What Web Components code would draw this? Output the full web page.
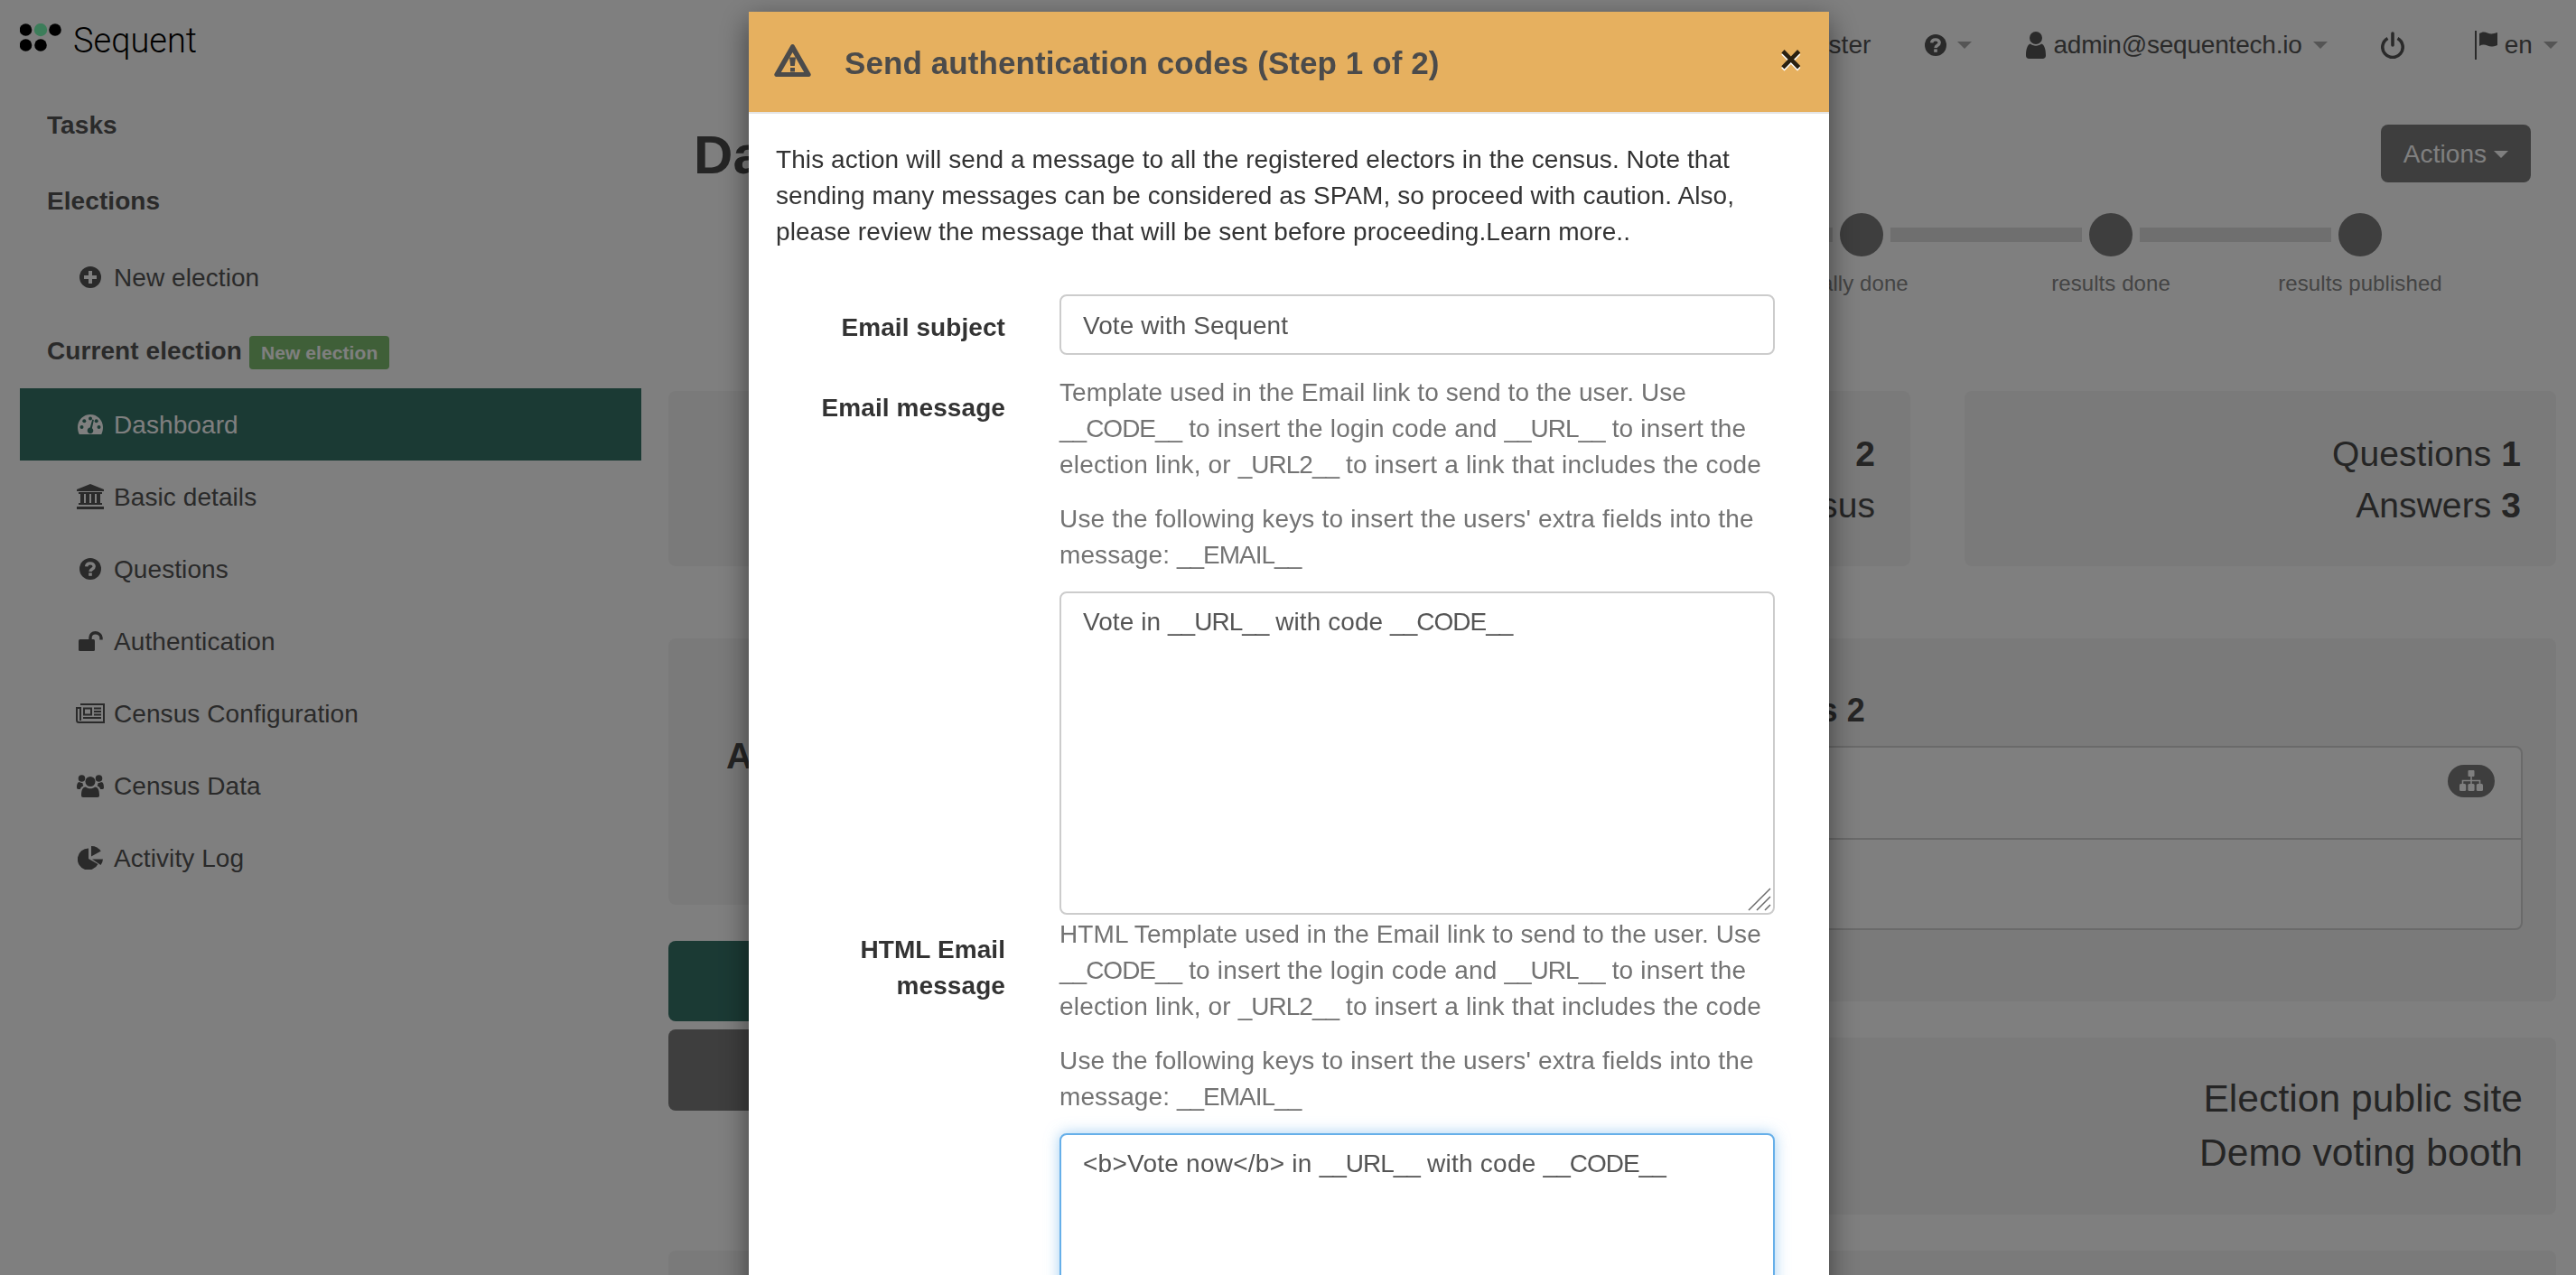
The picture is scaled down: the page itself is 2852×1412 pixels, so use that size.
<!DOCTYPE html>
<html lang="en">
<head>
<meta charset="utf-8">
<title>Sequent admin</title>
<style>
html, body { margin: 0; height: 100%; overflow: hidden; background: #fff; }
body { font: 28px/40px "Liberation Sans", Arial, sans-serif; color: #555; letter-spacing: .08px; }
</style>
</head>
<body>

<sq-page>
    <sq-topbar slot="top"></sq-topbar>
    <sq-sidebar slot="side">
        <sq-nav-head>Tasks</sq-nav-head>
        <sq-nav-head>Elections</sq-nav-head>
        <sq-nav-item icon="plus" tall>New election</sq-nav-item>
        <sq-nav-head short>Current election<sq-badge>New election</sq-badge></sq-nav-head>
        <sq-nav-item icon="gauge" active>Dashboard</sq-nav-item>
        <sq-nav-item icon="bank">Basic details</sq-nav-item>
        <sq-nav-item icon="question">Questions</sq-nav-item>
        <sq-nav-item icon="unlock">Authentication</sq-nav-item>
        <sq-nav-item icon="news">Census Configuration</sq-nav-item>
        <sq-nav-item icon="users">Census Data</sq-nav-item>
        <sq-nav-item icon="pie">Activity Log</sq-nav-item>
    </sq-sidebar>
    <sq-dashboard slot="main"></sq-dashboard>
</sq-page>

<sq-modal heading="Send authentication codes (Step 1 of 2)">
    <sq-intro>This action will send a message to all the registered electors in the census. Note that sending many messages can be considered as SPAM, so proceed with caution. Also, please review the message that will be sent before proceeding.Learn more..</sq-intro>
    <sq-field label="Email subject">
        <sq-input>Vote with Sequent</sq-input>
    </sq-field>
    <sq-field label="Email message">
        <sq-help>
            <sq-line>Template used in the Email link to send to the user. Use</sq-line>
            <sq-line wide><sq-key>__CODE__</sq-key> to insert the login code and <sq-key>__URL__</sq-key> to insert the</sq-line>
            <sq-line wide>election link, or <sq-key>_URL2__</sq-key> to insert a link that includes the code</sq-line>
        </sq-help>
        <sq-help>
            <sq-line wide>Use the following keys to insert the users' extra fields into the</sq-line>
            <sq-line>message: <sq-key>__EMAIL__</sq-key></sq-line>
        </sq-help>
        <sq-textarea>Vote in <sq-key>__URL__</sq-key> with code <sq-key>__CODE__</sq-key></sq-textarea>
    </sq-field>
    <sq-field label="HTML Email message" tight>
        <sq-help>
            <sq-line>HTML Template used in the Email link to send to the user. Use</sq-line>
            <sq-line wide><sq-key>__CODE__</sq-key> to insert the login code and <sq-key>__URL__</sq-key> to insert the</sq-line>
            <sq-line wide>election link, or <sq-key>_URL2__</sq-key> to insert a link that includes the code</sq-line>
        </sq-help>
        <sq-help>
            <sq-line wide>Use the following keys to insert the users' extra fields into the</sq-line>
            <sq-line>message: <sq-key>__EMAIL__</sq-key></sq-line>
        </sq-help>
        <sq-textarea focused>&lt;b&gt;Vote now&lt;/b&gt; in <sq-key>__URL__</sq-key> with code <sq-key>__CODE__</sq-key></sq-textarea>
    </sq-field>
</sq-modal>

<script>
function tpl(html) {
    const t = document.createElement("template")
    t.innerHTML = html
    return t
}

function open(el, t) {
    el.attachShadow({mode: "open"})
    el.shadowRoot.append(t.content.cloneNode(true))
}

//#region ICONS
const ICONS = {
    plus: [24, 24, `<circle cx="12" cy="12" r="12"/><path fill="#fff" d="M10 5h4v5h5v4h-5v5h-4v-5H5v-4h5z"/>`],
    question: [24, 24, `<circle cx="12" cy="12" r="12"/><path fill="none" stroke="#fff" stroke-width="3.4" d="M7.6 9.4c.3-2.4 2-3.5 4.3-3.5 2.500 0 4.300 1.400 4.300 3.400 0 3-4.200 2.900-4.200 5.700"/><rect x="10.200" y="16.400" width="3.600" height="3.400" fill="#fff"/>`],
    gauge: [28, 22, `<path d="M14 0C6.300 0 0 6.300 0 14c0 3 .6 5.600 1.800 8h24.400c1.200-2.400 1.800-5 1.800-8C28 6.300 21.700 0 14 0z"/><g fill="#367469"><circle cx="14" cy="4.500" r="2"/><circle cx="7.300" cy="7.300" r="2"/><circle cx="4.500" cy="14" r="2"/><circle cx="23.500" cy="14" r="2"/><circle cx="20.700" cy="7.300" r="2"/><path d="M16.300 5.500l1.600.5-2 9.200c.9.600 1.400 1.600 1.400 2.700 0 1.800-1.500 3.300-3.300 3.300s-3.300-1.500-3.300-3.300c0-1.700 1.300-3.100 3-3.300z"/></g>`],
    bank: [30, 28, `<path d="M15 0l15 6v2H0V6z"/><rect x="2" y="9" width="26" height="2"/><rect x="4" y="11" width="4" height="10"/><rect x="10" y="11" width="4" height="10"/><rect x="16" y="11" width="4" height="10"/><rect x="22" y="11" width="4" height="10"/><rect x="2" y="21" width="26" height="2"/><rect y="25" width="30" height="3"/>`],
    unlock: [27, 22, `<rect y="9" width="18" height="13" rx="1.500"/><path fill="none" stroke="currentColor" stroke-width="3.400" d="M13 10V7c0-3 2.300-5.300 5.500-5.300S25 4 25 7v2.500"/>`],
    news: [32, 22, `<path fill="none" stroke="currentColor" stroke-width="2" d="M5 1h26v20H3.500C2 21 1 20 1 18.500V5h4v14"/><path fill="none" stroke="currentColor" stroke-width="2" d="M9 5.500h8v7H9z"/><path d="M20 4.500h8v2h-8zM20 8h8v2h-8zM20 11.500h8v2h-8zM8 15h20v2H8z"/>`],
    users: [30, 26, `<circle cx="15" cy="8.500" r="5.500"/><circle cx="5.500" cy="5" r="3.800"/><circle cx="24.500" cy="5" r="3.800"/><path d="M7 26c-1.300 0-2-.8-2-2 0-5 1-9.500 5-9.500 1 1 3 1.800 5 1.800s4-.8 5-1.800c4 0 5 4.500 5 9.500 0 1.200-.7 2-2 2z"/><path d="M0 15c0-3 .7-6 3-6 1 .7 2 1.200 3.500 1.200 0 1 .3 2 .9 3C5.500 14 4.300 15.300 3.900 17H1.500C.5 17 0 16.200 0 15zM30 15c0-3-.7-6-3-6-1 .7-2 1.200-3.500 1.200 0 1-.3 2-.9 3 1.900.8 3.100 2.100 3.500 3.800h2.400c1 0 1.500-.8 1.500-2z"/>`],
    pie: [28, 26, `<path d="M12 2.500A12 12 0 1 0 22.500 20L12 14z"/><path d="M15 0v11.500l10.800-5.900A13 13 0 0 0 15 0z"/><path d="M16 14.500h12a13 13 0 0 1-2.500 6.500z"/>`],
    user: [22, 30, `<circle cx="11" cy="7" r="7"/><path d="M3.500 30C1.300 30 0 28.600 0 26.500 0 20.500 1.200 14.500 5 13.500c1.500 1.300 3.700 2.200 6 2.200s4.500-.9 6-2.200c3.800 1 5 7 5 13 0 2.100-1.300 3.500-3.500 3.500z"/>`],
    power: [26, 30, `<path fill="none" stroke="currentColor" stroke-width="3.600" d="M7.500 7.500a11.200 11.200 0 1 0 11 0"/><path fill="none" stroke="currentColor" stroke-width="3.600" stroke-linecap="round" d="M13 2v13"/>`],
    flag: [26, 32, `<rect y="0" width="2" height="32"/><path d="M5 3c3-2 6-2 9-.6 3 1.400 6 1.400 11-.4v14c-5 2-8 2-11 .6-3-1.400-6-1.400-9 .4z"/>`],
    sitemap: [26, 24, `<rect x="9.500" y="0" width="7" height="7" rx="1"/><path fill="none" stroke="currentColor" stroke-width="1.600" d="M13 7v8M3.500 15v-3.500h19V15"/><rect x="0" y="15" width="7.200" height="8" rx="1.500"/><rect x="9.400" y="15" width="7.200" height="8" rx="1.500"/><rect x="18.800" y="15" width="7.200" height="8" rx="1.500"/>`],
    warning: [41, 36, `<path fill-rule="evenodd" d="M20.500 0c.8 0 1.500.4 1.900 1.100l18 31.500c.9 1.500-.2 3.400-1.900 3.400H2.500C.8 36-.3 34.100.6 32.600l18-31.500C19 .4 19.700 0 20.500 0zM20.500 9L7.800 31h25.400z"/><path d="M17 14.500h7l-1.200 9.500h-4.600zM18 26h5v4.500h-5z"/>`]
}

class SqIcon extends HTMLElement {
    static get observedAttributes() { return ["name"] }
    constructor() {
        super()
        this.attachShadow({mode: "open"})
    }
    attributeChangedCallback() {
        const [w, h, body] = ICONS[this.getAttribute("name")]
        this.shadowRoot.innerHTML = `
            <style>:host { display: inline-flex; color: inherit; } svg { display: block; fill: currentColor; }</style>
            <svg width="${w}" height="${h}" viewBox="0 0 ${w} ${h}">${body}</svg>`
    }
}
customElements.define("sq-icon", SqIcon)
//#endregion ICONS

const pageTpl = tpl(`
<style>
:host { display: grid; grid-template-columns: 740px 2090px; grid-template-rows: 97px 1315px; width: 2852px; height: 1412px; overflow: hidden; }
.top { grid-column: 1 / 3; width: 2852px; }
</style>
<div class="top"><slot name="top"></slot></div>
<slot name="side"></slot>
<slot name="main"></slot>
`)
class SqPage extends HTMLElement {
    constructor() { super(); open(this, pageTpl) }
}
customElements.define("sq-page", SqPage)

const topbarTpl = tpl(`
<style>
:host { display: flex; align-items: center; height: 97px; padding: 0 20px 0 22px; box-sizing: border-box; color: #555; }
.logo { display: flex; align-items: flex-start; align-self: flex-start; color: #000; }
.logo svg { display: block; margin-top: 26px; }
.logo span { font: 300 38px/50px Roboto, sans-serif; margin-left: 13px; margin-top: 20px; letter-spacing: 0; }
nav { margin-left: auto; display: flex; align-items: center; gap: 60px; margin-top: 3px; }
.item { display: flex; align-items: center; }
.caret { width: 0; height: 0; border: 8px solid transparent; border-top-color: #aaa; border-bottom: 0; margin-left: 12px; }
.power { margin-left: -1px; }
.flag { margin-left: 18px; }
.flag span { margin-left: 7px; }
.user span { margin-left: 8px; letter-spacing: -.2px; }
</style>
<div class="logo">
    <svg width="46" height="34" viewBox="0 0 46 34">
        <circle cx="6.500" cy="7" r="6.800"/><circle cx="23" cy="7" r="7.200" fill="#78fab4"/><circle cx="39" cy="7" r="6.800"/>
        <circle cx="6.500" cy="24" r="6.800"/><circle cx="23" cy="24" r="6.800"/>
    </svg>
    <span>Sequent</span>
</div>
<nav>
    <div class="item"><span>Register</span></div>
    <div class="item"><sq-icon name="question"></sq-icon><i class="caret"></i></div>
    <div class="item user"><sq-icon name="user"></sq-icon><span>admin@sequentech.io</span><i class="caret"></i></div>
    <div class="item power"><sq-icon name="power"></sq-icon></div>
    <div class="item flag"><sq-icon name="flag"></sq-icon><span>en</span><i class="caret"></i></div>
</nav>
`)
class SqTopbar extends HTMLElement {
    constructor() { super(); open(this, topbarTpl) }
}
customElements.define("sq-topbar", SqTopbar)

const sidebarTpl = tpl(`
<style>
:host { display: block; padding-left: 22px; width: 688px; }
</style>
<slot></slot>
`)
class SqSidebar extends HTMLElement {
    constructor() { super(); open(this, sidebarTpl) }
}
customElements.define("sq-sidebar", SqSidebar)

const navHeadTpl = tpl(`
<style>
:host { display: flex; align-items: center; height: 84px; padding-left: 30px; font-weight: bold; color: #555; box-sizing: border-box; }
:host([short]) { height: 81px; padding-bottom: 2px; }
</style>
<slot></slot>
`)
class SqNavHead extends HTMLElement {
    constructor() { super(); open(this, navHeadTpl) }
}
customElements.define("sq-nav-head", SqNavHead)

const badgeTpl = tpl(`
<style>
:host { display: block; margin: 4px 0 0 8px; padding: 0 13px; height: 37px; font: bold 21px/37px "Liberation Sans", sans-serif; color: #fff; background: rgb(126,190,112); border-radius: 4px; }
</style>
<slot></slot>
`)
class SqBadge extends HTMLElement {
    constructor() { super(); open(this, badgeTpl) }
}
customElements.define("sq-badge", SqBadge)

const navItemTpl = tpl(`
<style>
:host { display: flex; align-items: center; height: 80px; color: #555; }
:host([tall]) { height: 84px; }
:host([active]) { background: #367469; color: #fff; }
.ic { width: 104px; display: flex; justify-content: flex-end; box-sizing: border-box; padding-right: 9px; }
.ic > div { width: 34px; display: flex; justify-content: center; }
.txt { padding-top: 2px; }
</style>
<div class="ic"><div></div></div>
<div class="txt"><slot></slot></div>
`)
class SqNavItem extends HTMLElement {
    constructor() { super(); open(this, navItemTpl) }
    connectedCallback() {
        const icon = document.createElement("sq-icon")
        icon.setAttribute("name", this.getAttribute("icon"))
        this.shadowRoot.querySelector(".ic > div").append(icon)
    }
}
customElements.define("sq-nav-item", SqNavItem)

const cardTpl = tpl(`
<style>
:host { display: block; background: #f5f5f5; border-radius: 8px; box-sizing: border-box; }
:host([stats]) { height: 194px; padding: 41px 39px 0; text-align: right; font-size: 39px; line-height: 57px; color: #4a4a4a; }
:host([links]) { height: 196px; padding: 38px 37px 0; text-align: right; font-size: 42.5px; line-height: 60px; color: #4a4a4a; }
</style>
<slot></slot>
`)
class SqCard extends HTMLElement {
    constructor() { super(); open(this, cardTpl) }
}
customElements.define("sq-card", SqCard)

const stepsTpl = tpl(`
<style>
:host { display: flex; justify-content: flex-end; padding-right: 193px; margin-top: 14px; height: 197px; }
.step { width: 48px; display: flex; flex-direction: column; align-items: center; }
.dot { width: 48px; height: 48px; border-radius: 50%; background: #7c7c7c; flex: none; }
.label { margin-top: 13px; font-size: 24px; line-height: 34px; color: #888; white-space: nowrap; }
.bar { width: 212px; height: 16px; margin: 16px 8px 0; background: #dedede; }
</style>
<div class="step"><div class="dot"></div></div>
<div class="bar"></div>
<div class="step"><div class="dot"></div></div>
<div class="bar"></div>
<div class="step"><div class="dot"></div><div class="label">tally done</div></div>
<div class="bar"></div>
<div class="step"><div class="dot"></div><div class="label">results done</div></div>
<div class="bar"></div>
<div class="step"><div class="dot"></div><div class="label">results published</div></div>
`)
class SqSteps extends HTMLElement {
    constructor() { super(); open(this, stepsTpl) }
}
customElements.define("sq-steps", SqSteps)

const panelTpl = tpl(`
<style>
:host { display: block; height: 204px; border: 2px solid #d4d4d4; border-radius: 8px; background: #fff; box-sizing: border-box; }
.row { height: 100px; display: flex; justify-content: flex-end; padding: 19px 29px 0 0; box-sizing: border-box; }
.row + .row { border-top: 2px solid #d4d4d4; }
.pill { width: 52px; height: 36px; border-radius: 18px; background: #7c7c7c; color: #fff; display: flex; align-items: center; justify-content: center; }
</style>
<div class="row"><div class="pill"><sq-icon name="sitemap"></sq-icon></div></div>
<div class="row"></div>
`)
class SqPanel extends HTMLElement {
    constructor() { super(); open(this, panelTpl) }
}
customElements.define("sq-panel", SqPanel)

const dashTpl = tpl(`
<style>
:host { display: block; height: 1315px; overflow: hidden; }
header { display: flex; align-items: center; justify-content: space-between; height: 104px; margin-top: 21px; padding: 0 28px; }
h1 { margin: 4px 0 0; font: bold 60px/66px "Liberation Sans", sans-serif; color: #4a4a4a; }
.actions { display: flex; align-items: center; gap: 8px; height: 64px; width: 166px; padding-top: 2px; justify-content: center; box-sizing: border-box; border-radius: 8px; background: #7c7c7c; color: #fff; font-size: 28px; }
.actions i { width: 0; height: 0; border: 8px solid transparent; border-top-color: #fff; border-bottom: 0; }
.stats { display: grid; grid-template-columns: 1fr 1fr 655px; gap: 60px; }
.split { display: grid; grid-template-columns: 657px 1373px; gap: 60px; margin-top: 80px; }
.col { display: flex; flex-direction: column; }
.left-card { height: 295px; padding: 104px 0 0 64px; box-sizing: border-box; font: bold 40px/52px "Liberation Sans", sans-serif; color: #4a4a4a; }
.btn { height: 89px; border-radius: 8px; background: #367469; margin-top: 40px; }
.btn.grey { background: #7c7c7c; margin-top: 9px; height: 90px; }
.right-card { height: 402px; padding: 54px 37px 0 429px; box-sizing: border-box; }
.right-card h2 { margin: 0 0 13px; font: bold 36px/52px "Liberation Sans", sans-serif; color: #4a4a4a; }
.links { margin-top: 40px; }
.last { height: 80px; margin-top: 40px; }
</style>
<header>
    <h1>Dashboard</h1>
    <div class="actions">Actions <i></i></div>
</header>
<sq-steps></sq-steps>
<div class="stats">
    <sq-card stats></sq-card>
    <sq-card stats><div><b>2</b></div><div>Census</div></sq-card>
    <sq-card stats><div>Questions <b>1</b></div><div>Answers <b>3</b></div></sq-card>
</div>
<div class="split">
    <div class="col">
        <sq-card class="left-card">Authentication</sq-card>
        <div class="btn"></div>
        <div class="btn grey"></div>
    </div>
    <div class="col">
        <sq-card class="right-card">
            <h2>Trustees 2</h2>
            <sq-panel></sq-panel>
        </sq-card>
        <sq-card links class="links"><div>Election public site</div><div>Demo voting booth</div></sq-card>
    </div>
</div>
<sq-card class="last"></sq-card>
`)
class SqDashboard extends HTMLElement {
    constructor() { super(); open(this, dashTpl) }
}
customElements.define("sq-dashboard", SqDashboard)

const modalTpl = tpl(`
<style>
:host { position: fixed; inset: 0; background: rgba(0,0,0,.5); overflow: hidden; display: block; }
.dialog { margin: 13px 0 0 829px; width: 1196px; background: #fff; box-shadow: 0 10px 30px rgba(0,0,0,.5); }
.head { display: flex; align-items: center; height: 111px; padding: 0 30px 0 28px; box-sizing: border-box; background: #e6b05f; color: #4b4b4b; }
.head h3 { margin: 2px 0 0 37px; font: bold 35px/50px "Liberation Sans", sans-serif; flex: 1; }
.head sq-icon { margin-top: -4px; }
.close { font: bold 42px/42px "Liberation Sans", sans-serif; color: #2a2010; text-shadow: 0 2px 0 #fff; margin-top: -6px; }
.rule { height: 2px; background: #e5e5e5; }
.body { padding: 31px 60px 40px 30px; }
</style>
<div class="dialog">
    <div class="head">
        <sq-icon name="warning"></sq-icon>
        <h3></h3>
        <div class="close">×</div>
    </div>
    <div class="rule"></div>
    <div class="body"><slot></slot></div>
</div>
`)
class SqModal extends HTMLElement {
    constructor() { super(); open(this, modalTpl) }
    connectedCallback() {
        this.shadowRoot.querySelector("h3").textContent = this.getAttribute("heading")
    }
}
customElements.define("sq-modal", SqModal)

const introTpl = tpl(`
<style>
:host { display: block; margin-right: -30px; margin-bottom: 49px; color: #333; }
</style>
<slot></slot>
`)
class SqIntro extends HTMLElement {
    constructor() { super(); open(this, introTpl) }
}
customElements.define("sq-intro", SqIntro)

const fieldTpl = tpl(`
<style>
:host { display: grid; grid-template-columns: 254px 792px; gap: 60px; margin-bottom: 22px; }
:host([tight]) { margin-top: -20px; }
label { display: block; padding-top: 17px; text-align: right; font-weight: bold; color: #333; }
</style>
<label></label>
<div><slot></slot></div>
`)
class SqField extends HTMLElement {
    constructor() { super(); open(this, fieldTpl) }
    connectedCallback() {
        this.shadowRoot.querySelector("label").textContent = this.getAttribute("label")
    }
}
customElements.define("sq-field", SqField)

const helpTpl = tpl(`
<style>
:host { display: block; margin-bottom: 20px; padding-top: 1px; margin-top: -1px; color: #737373; }
</style>
<slot></slot>
`)
class SqHelp extends HTMLElement {
    constructor() { super(); open(this, helpTpl) }
}
customElements.define("sq-help", SqHelp)

// one line of help text, so the lines break where the reference breaks them
const lineTpl = tpl(`
<style>
:host { display: block; white-space: nowrap; }
:host([wide]) { letter-spacing: .18px; }
</style>
<slot></slot>
`)
class SqLine extends HTMLElement {
    constructor() { super(); open(this, lineTpl) }
}
customElements.define("sq-line", SqLine)

// the underscores of the template keys are narrower in the reference
const keyTpl = tpl(`<style>:host { letter-spacing: -1px; }</style><slot></slot>`)
class SqKey extends HTMLElement {
    constructor() { super(); open(this, keyTpl) }
}
customElements.define("sq-key", SqKey)

const inputTpl = tpl(`
<style>
:host { display: flex; align-items: center; height: 67px; padding: 3px 24px 0; box-sizing: border-box; border: 2px solid #ccc; border-radius: 8px; color: #555; }
</style>
<slot></slot>
`)
class SqInput extends HTMLElement {
    constructor() { super(); open(this, inputTpl) }
}
customElements.define("sq-input", SqInput)

const textareaTpl = tpl(`
<style>
:host { display: block; position: relative; height: 358px; padding: 12px 24px; box-sizing: border-box; border: 2px solid #ccc; border-radius: 8px; color: #555; background: #fff; }
:host([focused]) { border-color: #66afe9; box-shadow: 0 0 16px rgba(102,175,233,.6); letter-spacing: .25px; }
svg { position: absolute; right: 2px; bottom: 2px; }
</style>
<slot></slot>
<svg width="26" height="26" viewBox="0 0 26 26" fill="none" stroke="#6a6a6a" stroke-width="1.500">
    <path d="M1 25L25 1M10 25L25 10M19 25L25 19"/>
</svg>
`)
class SqTextarea extends HTMLElement {
    constructor() { super(); open(this, textareaTpl) }
}
customElements.define("sq-textarea", SqTextarea)
</script>
</body>
</html>
